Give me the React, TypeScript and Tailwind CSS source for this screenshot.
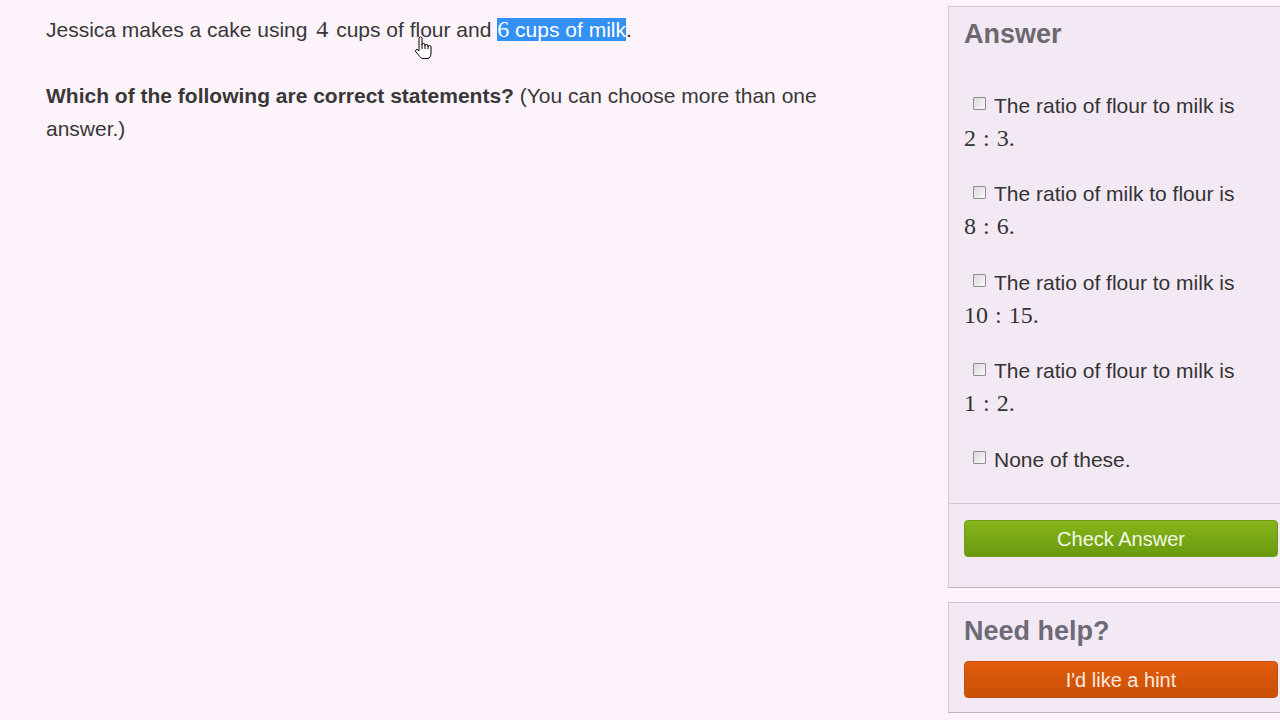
export default function App() {
  const choices = [
    { text: "The ratio of flour to milk is", a: "2", b: "3" },
    { text: "The ratio of milk to flour is", a: "8", b: "6" },
    { text: "The ratio of flour to milk is", a: "10", b: "15" },
    { text: "The ratio of flour to milk is", a: "1", b: "2" },
  ];

  return (
    <div className="relative flex w-[1280px] h-[720px] overflow-hidden bg-[#fcf3fb] font-['Liberation_Sans',Arial,sans-serif] text-[#383838]">
      {/* Question */}
      <div className="w-[948px] shrink-0 pl-[46px] pr-[100px] pt-[13px] text-[21px] leading-[33px]">
        <p>
          Jessica makes a cake using{" "}
          <span className="pl-[3px] pr-[2px] font-['Liberation_Serif',serif] text-[24px]">4</span> cups of flour and{" "}
          <span className="bg-[#3390f5] text-white">
            <span className="font-['Liberation_Serif',serif] text-[24px]">6</span> cups of milk
          </span>
          .
        </p>
        <p className="mt-[33px]">
          <b className="font-bold">Which of the following are correct statements?</b> (You can choose more
          than one answer.)
        </p>
      </div>

      {/* Sidebar */}
      <div className="w-[346px] shrink-0 pt-[6px]">
        <div className="border border-[#d2c8d5] border-b-[#bdb4c0] bg-[#f3e9f5]">
          <div className="pl-[15px] pr-4 pb-[27.5px]">
            <div className="pt-[10px] text-[27px] leading-[34px] font-bold text-[#6b686f]">Answer</div>
            <div className="mt-[37.5px] flex flex-col gap-[22.5px]">
              {choices.map((c, i) => (
                <div key={i}>
                  <div className="flex items-center text-[21px] leading-[33px] text-[#333]">
                    <Checkbox />
                    {c.text}
                  </div>
                  <div className="font-['Liberation_Serif',serif] text-[24px] leading-[33px] text-[#333]">
                    {c.a}
                    <span className="mx-[7px]">:</span>
                    {c.b}.
                  </div>
                </div>
              ))}
              <div className="flex items-center text-[21px] leading-[33px] text-[#333]">
                <Checkbox />
                None of these.
              </div>
            </div>
          </div>
          <div className="border-t border-[#d2c8d5] pl-[15px] pr-4 pt-4 pb-[30px]">
            <button className="w-[314px] h-[37px] rounded-[4px] border border-[#6f9a12] bg-linear-to-b from-[#88b51c] to-[#699a0e] text-[20px] text-[#f1f8e2]">
              Check Answer
            </button>
          </div>
        </div>

        <div className="mt-[14px] border border-[#d2c8d5] border-b-[#bdb4c0] bg-[#f3e9f5] pl-[15px] pr-4 pt-[11px] pb-[14px]">
          <div className="text-[27px] leading-[34px] font-bold text-[#6d6b75]">Need help?</div>
          <button className="mt-[13px] w-[314px] h-[37px] rounded-[4px] border border-[#c24f0a] bg-linear-to-b from-[#e25d0c] to-[#c94f08] text-[20px] text-[#fce9de]">
            I'd like a hint
          </button>
        </div>
      </div>

      {/* Mouse pointer */}
      <svg
        className="absolute left-[414px] top-[36px]"
        width="19"
        height="25"
        viewBox="0 0 19 25"
      >
        <path
          d="M5 12.5V2.5a1.5 1.5 0 0 1 3 0V9a1.5 1.5 0 0 1 3 0v1a1.5 1.5 0 0 1 3 0v1a1.5 1.5 0 0 1 3 0v6c0 3-1.5 5.5-3 5.5H8.5c-1.5 0-2.5-1.5-3.5-3L1.8 15.8a1.4 1.4 0 0 1 2.2-1.8l1 1z"
          fill="white"
          stroke="black"
          strokeWidth="1"
          strokeLinejoin="round"
        />
        <path d="M8 9v4M11 10v3M14 11v2" stroke="black" strokeWidth="1" fill="none" />
      </svg>
    </div>
  );
}

function Checkbox() {
  return (
    <span className="ml-[9px] mr-[8px] -mt-[3px] inline-block w-[13px] h-[13px] shrink-0 rounded-[1px] border border-[#8e8e8e] bg-linear-to-br from-[#d8d8d8] to-[#fbfbfb]" />
  );
}
